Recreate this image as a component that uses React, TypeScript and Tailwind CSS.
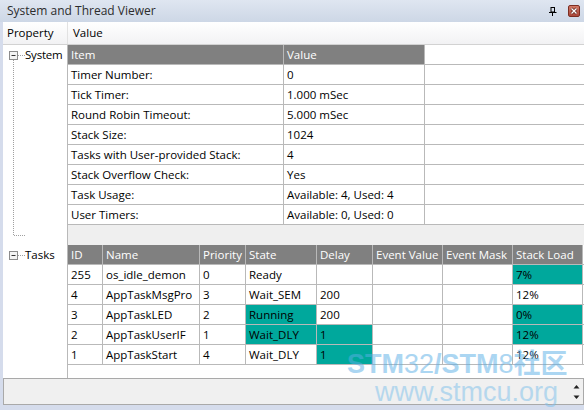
import React from "react";

const sysRows: [string, string][] = [
  ["Timer Number:", "0"],
  ["Tick Timer:", "1.000 mSec"],
  ["Round Robin Timeout:", "5.000 mSec"],
  ["Stack Size:", "1024"],
  ["Tasks with User-provided Stack:", "4"],
  ["Stack Overflow Check:", "Yes"],
  ["Task Usage:", "Available: 4, Used: 4"],
  ["User Timers:", "Available: 0, Used: 0"],
];

const taskCols = [
  { name: "ID", w: "w-[35px]" },
  { name: "Name", w: "w-[97px]" },
  { name: "Priority", w: "w-[46px]" },
  { name: "State", w: "w-[71px]" },
  { name: "Delay", w: "w-[56px]" },
  { name: "Event Value", w: "w-[70px]" },
  { name: "Event Mask", w: "w-[70px]" },
  { name: "Stack Load", w: "w-[70px]" },
];

type Cell = string | { t: string; hl: true };
const hl = (t: string): Cell => ({ t, hl: true });

const taskRows: Cell[][] = [
  ["255", "os_idle_demon", "0", "Ready", "", "", "", hl("7%")],
  ["4", "AppTaskMsgPro", "3", "Wait_SEM", "200", "", "", "12%"],
  ["3", "AppTaskLED", "2", hl("Running"), "200", "", "", hl("0%")],
  ["2", "AppTaskUserIF", "1", hl("Wait_DLY"), hl("1"), "", "", hl("12%")],
  ["1", "AppTaskStart", "4", "Wait_DLY", hl("1"), "", "", "12%"],
];

const cellBase =
  "h-[20px] shrink-0 border-r border-b border-[#b9b9b9] pl-[3px] flex items-center whitespace-nowrap overflow-hidden";
const headBase =
  "h-[20px] shrink-0 border-r border-b border-[#b9b9b9] pl-[3px] flex items-center whitespace-nowrap overflow-hidden bg-[#808080] text-white";

function TreeLines() {
  return (
    <svg className="absolute inset-0 pointer-events-none" width="64" height="333">
      <g stroke="#a0a0a0" strokeDasharray="1 1" fill="none">
        <line x1="15" y1="10.5" x2="22" y2="10.5" />
        <line x1="10.5" y1="15" x2="10.5" y2="190" />
        <line x1="11" y1="190.5" x2="23" y2="190.5" />
        <line x1="15" y1="210.5" x2="22" y2="210.5" />
      </g>
      {[6.5, 206.5].map((y) => (
        <g key={y}>
          <rect x="6.5" y={y} width="8" height="8" fill="#f4f4f4" stroke="#8c8c8c" />
          <line x1="8.5" y1={y + 4} x2="12.5" y2={y + 4} stroke="#333" />
        </g>
      ))}
    </svg>
  );
}

export default function App() {
  return (
    <div className="w-[584px] h-[410px] bg-[#d5dcec] flex flex-col overflow-hidden font-['Open_Sans',sans-serif] text-[11.5px] text-black relative">
      {/* title bar */}
      <div className="h-[22px] shrink-0 flex items-center pl-[7px] pr-[4px] bg-gradient-to-b from-[#dfe6f1] to-[#cdd7e6] text-[#2c2c2c] text-[12px]">
        <span className="flex-1">System and Thread Viewer</span>
        <svg width="8" height="9" viewBox="0 0 8 9" className="mr-[11px]">
          <rect x="2" y="0.5" width="3.5" height="4.5" fill="none" stroke="#000" />
          <line x1="0" y1="5.5" x2="7.5" y2="5.5" stroke="#000" />
          <line x1="3.5" y1="5.5" x2="3.5" y2="9" stroke="#000" />
        </svg>
        <div className="w-[12px] h-[12px] rounded-[2px] border border-[#7c2e22] bg-gradient-to-b from-[#d27a68] to-[#a9473a] flex items-center justify-center">
          <svg width="8" height="8" viewBox="0 0 8 8">
            <path d="M1.5 1.5 L6.5 6.5 M6.5 1.5 L1.5 6.5" stroke="#5a1a10" strokeWidth="2.6" />
            <path d="M1.5 1.5 L6.5 6.5 M6.5 1.5 L1.5 6.5" stroke="#fff" strokeWidth="1.4" />
          </svg>
        </div>
      </div>

      <div className="flex-1 flex flex-col pl-[3px]">
        {/* column headers */}
        <div className="h-[23px] shrink-0 flex border-b border-[#d2d2d2] bg-gradient-to-b from-white to-[#f2f2f4]">
          <div className="w-[65px] border-r border-[#e2e2e2] pl-[4px] flex items-center">Property</div>
          <div className="flex-1 pl-[5px] flex items-center">Value</div>
        </div>

        {/* body */}
        <div className="h-[333px] shrink-0 flex bg-white">
          <div className="w-[65px] shrink-0 border-r border-[#b9b9b9] relative overflow-hidden">
            <TreeLines />
            <div className="h-[20px] pl-[22px] flex items-center tracking-[-0.2px]">System</div>
            <div className="h-[180px]" />
            <div className="h-[20px] pl-[22px] flex items-center">Tasks</div>
          </div>

          <div className="flex-1 flex flex-col">
            {/* system grid */}
            <div className="flex">
              <div className={`${headBase} w-[216px]`}>Item</div>
              <div className={`${headBase} w-[141px]`}>Value</div>
              <div className="flex-1 h-[20px] border-b border-[#b9b9b9]" />
            </div>
            {sysRows.map(([k, v]) => (
              <div key={k} className="flex">
                <div className={`${cellBase} w-[216px]`}>{k}</div>
                <div className={`${cellBase} w-[141px]`}>{v}</div>
                <div className="flex-1 h-[20px] border-b border-[#b9b9b9]" />
              </div>
            ))}
            <div className="h-[20px] bg-[#efefef]" />

            {/* tasks grid */}
            <div className="flex">
              {taskCols.map((c) => (
                <div key={c.name} className={`${headBase} ${c.w}`}>
                  {c.name}
                </div>
              ))}
              <div className="flex-1 h-[20px] border-b border-[#b9b9b9]" />
            </div>
            {taskRows.map((r, i) => (
              <div key={i} className="flex">
                {r.map((c, j) => {
                  const isHl = typeof c !== "string";
                  return (
                    <div
                      key={j}
                      className={`${cellBase} ${taskCols[j].w} ${isHl ? "bg-[#00a89c]" : ""}`}
                    >
                      {typeof c === "string" ? c : c.t}
                    </div>
                  );
                })}
                <div className="flex-1 h-[20px] border-b border-[#b9b9b9]" />
              </div>
            ))}
          </div>
        </div>

        {/* description panel */}
        <div className="h-[27px] shrink-0 border border-[#a9a9a9] bg-[#f0f0f0] flex items-center justify-end pr-[3px]">
          <svg width="7" height="18" viewBox="0 0 7 18">
            <path d="M3.5 2 L6.5 5.5 L0.5 5.5 Z" fill="#222" />
            <path d="M3.5 16 L6.5 12.5 L0.5 12.5 Z" fill="#222" />
          </svg>
        </div>
        <div className="h-[5px] shrink-0" />
      </div>

      {/* watermark */}
      <div className="absolute left-[347px] top-[348px] pointer-events-none select-none font-['Liberation_Sans',Arial,'Noto_Sans_CJK_SC',sans-serif] text-[#5aaee6] opacity-50 leading-none">
        <div className="text-[27px] whitespace-nowrap">
          <span className="font-bold">STM</span>
          <span className="font-normal">32</span>
          <span className="font-bold">/STM</span>
          <span className="font-normal">8</span>
          <span className="font-bold font-['Noto_Sans_CJK_SC',sans-serif]">社区</span>
        </div>
        <div className="text-[27px] ml-[28px] mt-[1px] whitespace-nowrap text-[#7cc0ec]">www.stmcu.org</div>
      </div>
    </div>
  );
}
